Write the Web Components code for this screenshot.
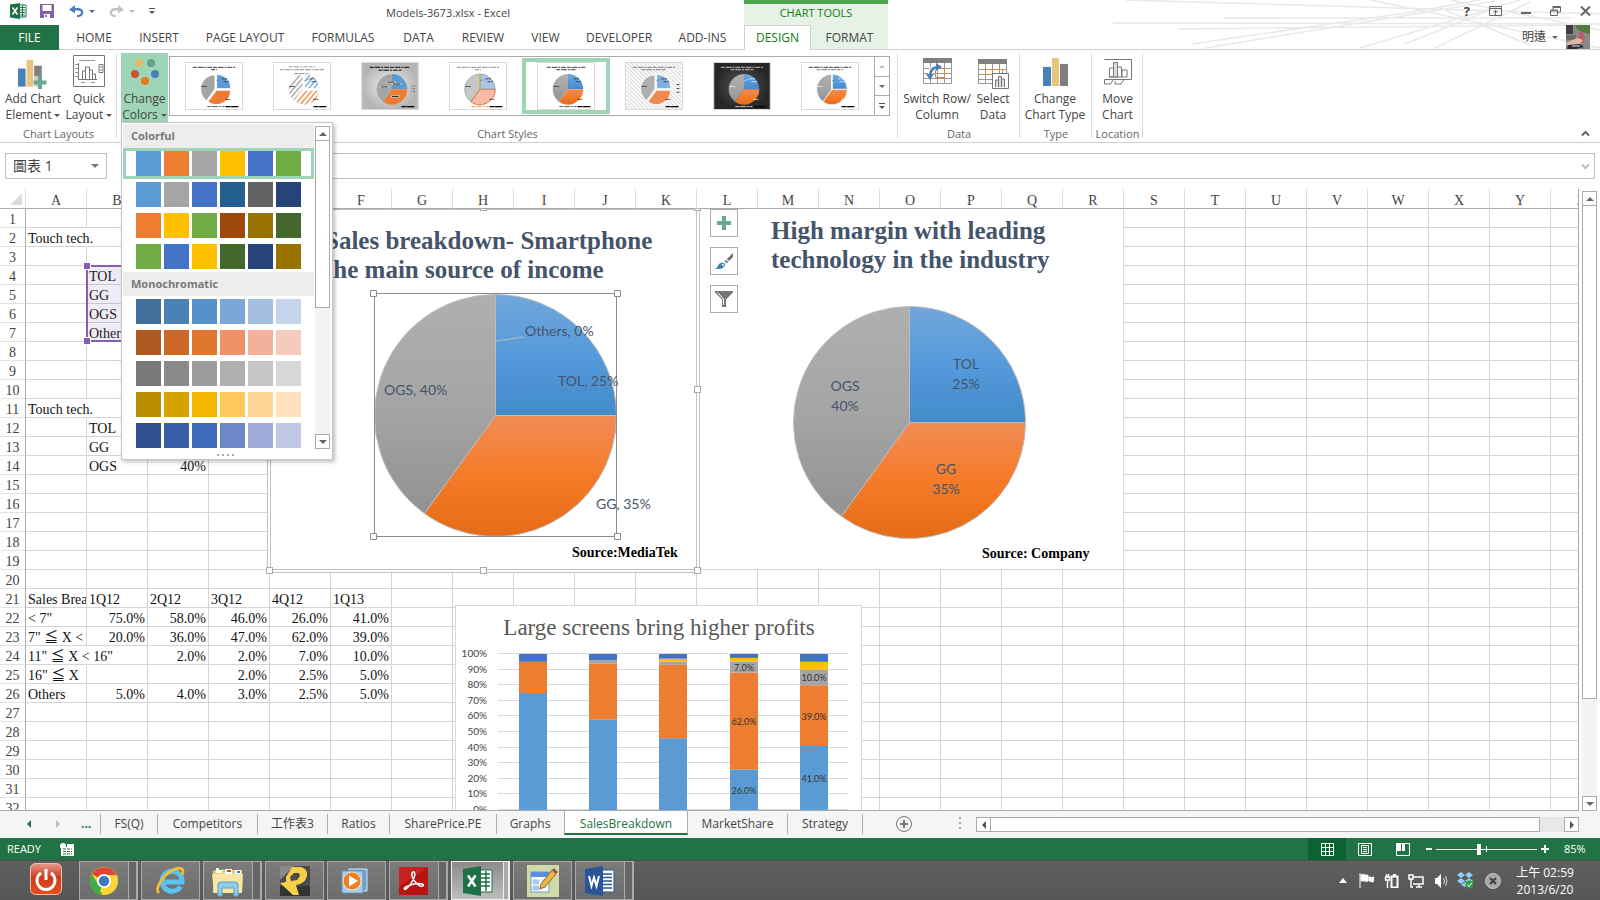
<!DOCTYPE html>
<html lang="en">
<head>
<meta charset="utf-8">
<title>Models-3673.xlsx - Excel</title>
<style>
html,body{margin:0;height:100%}
body{font:12px/16px "Open Sans","Noto Sans","Noto Sans CJK TC",sans-serif;color:#444;background:#fff;overflow:hidden}
</style>
</head>
<body>
<excel-app></excel-app>
<script>
const BASE = `
*{box-sizing:border-box}
:host{display:block;box-sizing:border-box}
button{font:inherit;color:inherit;background:none;border:0;padding:0;margin:0;display:block}
input{font:inherit;color:inherit;margin:0;border:0;padding:0;background:none;outline:0}
a{color:inherit;text-decoration:none}
svg{display:block;flex:none}
`;
function define(name, css, html) {
  customElements.define(name, class extends HTMLElement {
    constructor() {
      super();
      this.attachShadow({mode: 'open'});
    }
    connectedCallback() {
      const t = document.createElement('template');
      t.innerHTML = `<style>${BASE}${css}</style>` + (typeof html === 'function' ? html(this) : html);
      this.shadowRoot.replaceChildren(t.content.cloneNode(true));
    }
  });
}
const tri = (dir = 'd', c = '#666', w = 6) => {
  const p = {d: 'M0 0H6L3 3Z', u: 'M0 3H6L3 0Z', l: 'M3 0V6L0 3Z', r: 'M0 0V6L3 3Z'}[dir];
  const v = dir === 'l' || dir === 'r';
  return `<svg width="${v ? w / 2 : w}" height="${v ? w : w / 2}" viewBox="0 0 ${v ? '3 6' : '6 3'}"><path d="${p}" fill="${c}"/></svg>`;
};

/* ---------- pie geometry ---------- */
const PARTS = [[0, .25], [.25, .6], [.6, 1]];
function slices(cx, cy, r, fills, stroke = '#ccc', gap = 0, sw = 1) {
  return PARTS.map(([a, b], i) => {
    const m = (a + b) * Math.PI, ox = cx + gap * Math.sin(m), oy = cy - gap * Math.cos(m);
    const pt = f => `${(ox + r * Math.sin(f * 2 * Math.PI)).toFixed(2)} ${(oy - r * Math.cos(f * 2 * Math.PI)).toFixed(2)}`;
    return `<path d="M${ox.toFixed(2)} ${oy.toFixed(2)}L${pt(a)}A${r} ${r} 0 0 1 ${pt(b)}Z" fill="${fills[i]}" stroke="${stroke}" stroke-width="${sw}" stroke-linejoin="round"/>`;
  }).join('');
}
const GRADS = `<defs>
<linearGradient id="gb" x2="0" y2="1"><stop stop-color="#71a6db"/><stop offset=".5" stop-color="#559bdb"/><stop offset="1" stop-color="#438ac9"/></linearGradient>
<linearGradient id="go" x2="0" y2="1"><stop stop-color="#f18c55"/><stop offset=".5" stop-color="#f67b28"/><stop offset="1" stop-color="#e56b17"/></linearGradient>
<linearGradient id="gg" x2="0" y2="1"><stop stop-color="#afafaf"/><stop offset=".5" stop-color="#a5a5a5"/><stop offset="1" stop-color="#929292"/></linearGradient>
</defs>`;
const GFILL = ['url(#gb)', 'url(#go)', 'url(#gg)'];

/* ---------- header: title row and ribbon tabs ---------- */
const X_LOGO = `<svg width="17" height="16" viewBox="0 0 17 16"><path d="M9 2h7v12H9z" fill="#fff" stroke="#217346"/><path d="M10 4.500h5M10 7h5M10 9.500h5M10 12h5M12.500 2v12" stroke="#217346"/><path d="M0 1.500L10 0v16L0 14.500z" fill="#1e7145"/><path d="M2.500 4.500l5 7M7.500 4.500l-5 7" stroke="#fff" stroke-width="1.600"/></svg>`;
define('app-header', `
:host{position:relative;background:#fff}
.swoosh{position:absolute;right:0;top:0}
.row{display:flex;height:25px;position:relative}
.left{display:flex;width:744px}
.qat{display:flex;width:152px;height:22px;padding-left:10px;align-items:center}
.qat button{height:22px;display:flex;align-items:center}
.name{flex:1;text-align:center;font-size:11px;line-height:25px}
.ctx{width:144px;background:#e6f2e6;border-top:4px solid #4ca64c;color:#107c10;font-size:11px;line-height:18px;text-align:center}
.right{flex:1;display:flex;height:22px;justify-content:flex-end;align-items:center;padding-right:9px}
.right button{margin-left:19px}
nav{display:flex;flex:1}
nav a{height:25px;line-height:25px;text-align:center;border-bottom:1px solid #d0d0d0;flex:none}
nav .file{width:59px;margin-right:0;background:#217346;color:#fff;border-color:#217346}
nav i{width:3px;border-bottom:1px solid #d0d0d0}
nav .on{width:67px;color:#107c10;background:#fff;border:1px solid #d0d0d0;border-bottom:0;line-height:24px}
nav .fmt{width:77px;background:#e6f2e6}
.user{flex:1;display:flex;justify-content:flex-end;align-items:center;gap:8px;padding-right:10px;border-bottom:1px solid #d0d0d0}
.user button{display:flex;align-items:center;gap:6px;height:24px}
`, () => `
<svg class="swoosh" width="560" height="50" viewBox="0 0 560 50" fill="none" stroke="#e9e9e9" stroke-width="1.500"><path d="M85 0L560 14M73 23L560 24M184 18H530M138 29L540 25M152 44L372 12L440 0M165 48L455 1M320 48L480 0M365 44L450 10M395 48L490 2M330 0L560 48M410 0L560 30M400 8L490 45"/></svg>
<div class="row">
 <div class="left">
  <div class="qat">
   ${X_LOGO}
   <button aria-label="Save" style="margin-left:13px"><svg width="14" height="14" viewBox="0 0 14 14"><path d="M0 0h14v14H0z" fill="#8660a6"/><path d="M2.500 1h9v6h-9zM4 10h6v4H4z" fill="#fff"/><path d="M5 11h2v2H5z" fill="#8660a6"/></svg></button>
   <button aria-label="Undo" style="margin-left:15px"><svg width="15" height="13" viewBox="0 0 15 13"><path d="M6 0v3h3c7 0 7 9 0 9H8v-2h1c4 0 4-4.500 0-4.500H6v3L0 4.500z" fill="#4a80bd"/></svg></button>
   <button aria-label="Undo list" style="margin-left:5px">${tri()}</button>
   <button aria-label="Redo" style="margin-left:14px"><svg width="15" height="13" viewBox="0 0 15 13"><path d="M9 0v3H6c-7 0-7 9 0 9h1v-2H6c-4 0-4-4.500 0-4.500h3v3l6-4z" fill="#c3c3c3"/></svg></button>
   <button aria-label="Redo list" style="margin-left:5px">${tri('d', '#bbb')}</button>
   <button aria-label="Customize" style="margin-left:14px"><svg width="6" height="6"><path d="M0 0h6v1H0zM0 3h6L3 6z" fill="#555"/></svg></button>
  </div>
  <div class="name">Models-3673.xlsx - Excel</div>
 </div>
 <div class="ctx">CHART TOOLS</div>
 <div class="right">
  <button aria-label="Help" style="font:bold 13px/20px 'Open Sans'">?</button>
  <button aria-label="Ribbon options"><svg width="13" height="10" fill="none" stroke="#666"><path d="M.5.5h12v9H.5zM.5 2.500h12M6.500 9V4.500M4.500 6.500l2-2 2 2"/></svg></button>
  <button aria-label="Minimize"><svg width="10" height="10"><path d="M0 6h10v2H0z" fill="#666"/></svg></button>
  <button aria-label="Restore"><svg width="11" height="10" fill="none" stroke="#666"><path d="M.5 4h7v5.500h-7zM.5 5h7M3 4V.5h7.500V6H8M3 1.500h7"/></svg></button>
  <button aria-label="Close"><svg width="11" height="10" fill="none" stroke="#666" stroke-width="2"><path d="M1 .5l9 9M10 .5l-9 9"/></svg></button>
 </div>
</div>
<div class="row">
 <nav>
  <a href="#" class="file">FILE</a><i></i>
  ${[['HOME', 64], ['INSERT', 66], ['PAGE LAYOUT', 106], ['FORMULAS', 90], ['DATA', 61], ['REVIEW', 68], ['VIEW', 57], ['DEVELOPER', 90], ['ADD-INS', 77]].map(([t, w]) => `<a href="#" style="width:${w}px">${t}</a>`).join('')}<i></i>
  <a href="#" class="on">DESIGN</a><a href="#" class="fmt">FORMAT</a>
  <div class="user"><button>明遠 ${tri()}</button>
   <svg width="24" height="24" viewBox="0 0 24 24"><path d="M0 0h24v24H0z" fill="#8a8a84"/><path d="M0 0h7v9H0z" fill="#3b3f44"/><path d="M9 0h15v9l-8-2-5-3z" fill="#4e7c3c"/><path d="M0 10h10v5H0z" fill="#6d6a66"/><path d="M13 8l3-2 3 7-2 5-4-2z" fill="#c9546e"/><path d="M0 18l11-5 6 2-3 4-12 3z" fill="#ddb9a4"/><path d="M2 20l12-1 4 3-8 2H1z" fill="#2a2d33"/><path d="M6 21h8" stroke="#dfe6ea"/></svg></div>
 </nav>
</div>`);

/* ---------- ribbon ---------- */
define('ribbon-group', `
:host{display:flex;flex-direction:column;flex:none;height:92px;position:relative}
:host::after{content:"";position:absolute;right:0;top:3px;bottom:4px;width:1px;background:#dcdcdc}
.c{display:flex;padding-top:3px;height:76px}
.l{text-align:center;font-size:11px;line-height:16px;color:#666;white-space:nowrap}
`, h => `<div class="c"><slot></slot></div><div class="l">${h.getAttribute('label')}</div>`);
define('ribbon-button', `
:host{flex:none}
button{width:100%;height:69px;padding-top:2px;text-align:center;white-space:nowrap}
.i{height:34px;margin-bottom:2px;display:flex;justify-content:center;align-items:flex-start}
.s{display:flex;align-items:center;justify-content:center;gap:3px}
:host([on]) button{background:#9fd5b7}
`, h => `<button><div class="i"><slot></slot></div><div class="s">${h.getAttribute('top')}</div><div class="s">${h.getAttribute('bottom')}${h.hasAttribute('menu') ? tri('d', '#555', 6) : ''}</div></button>`);

const words = (y, w, c = '#333', x = 29) => `<path d="M${x - w / 2} ${y}h${w}" stroke="${c}" stroke-width="1" stroke-dasharray="4 1 6 1 2 1 5 1"/>`;
const FLAT = ['#5b9bd5', '#ed7d31', '#a5a5a5'];
const thumbs = [
  () => `${words(4.500, 44)}${words(7, 6)}${slices(31, 27.500, 15, FLAT, '#fff', 1, 1)}${words(45.500, 18, '#555', 31)}`,
  () => `<defs>${[['hb', '#5b9bd5'], ['ho', '#ed7d31'], ['hg', '#999']].map(([i, c]) => `<pattern id="${i}" width="4" height="4" patternUnits="userSpaceOnUse" patternTransform="rotate(40)"><path d="M0 0h1.300v4H0z" fill="${c}"/></pattern>`).join('')}</defs>${words(4, 28, '#999')}${words(7, 46, '#888')}${words(11, 16, '#888')}${slices(31, 27.500, 15.500, ['url(#hb)', 'url(#ho)', 'url(#hg)'], '#fff', 1, 1)}`,
  () => `<defs><radialGradient id="rg"><stop stop-color="#f4f4f4"/><stop offset="1" stop-color="#b5b5b5"/></radialGradient></defs><path d="M0 0h58v48H0z" fill="url(#rg)"/>${words(4.500, 42, '#000')}${words(7.500, 24, '#000')}${slices(31, 27.500, 16, FLAT, 'none')}<path d="M25 20h10M31 22h10M18 25h10M30 35h9" stroke="#ddd" stroke-width="2"/><path d="M26 20h8M32 22h8M19 25h8M31 35h7" stroke="#222"/><path d="M51 24h4M51 27h4M51 30h4" stroke="#666" stroke-dasharray="1 1 2"/>`,
  () => `${words(4.500, 44, '#888')}${words(7, 6, '#888')}${slices(31, 27.500, 16, ['#a9c7ee', '#f9b9a2', '#c6c6c6'], '#888', 0, .6)}<path d="M31 27.500H47A16 16 0 0 1 21.600 40.440Z" fill="none" stroke="#ee7a4a" stroke-width=".8"/><path d="M31 11v16" stroke="#d0b23a" stroke-width="1.500"/>${words(45.500, 18, '#ed9d31', 31)}`,
  () => `${words(4.500, 40)}${words(7, 20)}${slices(31, 27.500, 16, GFILL, 'none')}${words(45.500, 18, '#555', 31)}`,
  () => `<defs><pattern id="bg" width="3" height="3" patternUnits="userSpaceOnUse" patternTransform="rotate(-45)"><path d="M0 0h1.200v3H0z" fill="#d8d8d8"/></pattern></defs><path d="M0 0h58v48H0z" fill="url(#bg)"/>${words(4.500, 44, '#777')}${words(7, 26, '#777')}${slices(31, 27.500, 15, ['#7db0e4', '#f08a50', '#b0b0b0'], '#fff', 1, 1)}<path d="M54 22v12" stroke="#444" stroke-width="3" stroke-dasharray="1 3"/>`,
  () => `<defs><radialGradient id="dk"><stop stop-color="#5a5a5a"/><stop offset="1" stop-color="#262626"/></radialGradient></defs><path d="M0 0h58v48H0z" fill="url(#dk)"/>${words(4.500, 44, '#ccc')}${words(7, 24, '#ccc')}${slices(31, 27.500, 16, GFILL, 'none')}${words(45.500, 18, '#ccc', 31)}`,
  () => `${words(4.500, 44)}${words(7, 28, '#777')}${slices(31, 27.500, 16, GFILL, '#fff', 0, .8)}<path d="M31 27.500V11" stroke="#fff" stroke-width="1.500"/>`
];
const labelTicks = i => {
  const c = i === 6 || i === 7 ? '#eee' : '#333';
  return (i === 2 ? '' : `<path d="M31 18.500l6-1.500" stroke="${i === 6 ? '#ccc' : '#789'}" stroke-width=".7"/><path d="M37 16.500h8M39 19.500h6M16 24.500h6M41 38h5" stroke="${c}" stroke-width=".9" stroke-dasharray="3 .5 2"/>`) + `<path d="M41 45.500h15" stroke="#000" stroke-width="1.200" stroke-dasharray="5 .5 8"/>`;
};
define('style-gallery', `
:host{display:flex;flex:none;height:60px;width:721px;margin:3px 0 0 1px;border:1px solid #ababab;background:#fff}
.t{width:88px;height:58px;display:flex;align-items:center;justify-content:center}
.t.on{border:4px solid #9fd5b7;height:56px;margin-top:1px}
.t svg{border:1px solid #d9d9d9}
.s{width:15px;border-left:1px solid #ababab;display:flex;flex-direction:column}
.s button{flex:1;display:flex;align-items:center;justify-content:center;width:100%}
.s button+button{border-top:1px solid #ababab}
`, () => thumbs.map((f, i) => `<button class="t${i === 4 ? ' on' : ''}" aria-label="Style ${i + 1}"><svg width="58" height="48" viewBox="0 0 58 48">${i === 4 || i > 5 ? GRADS : ''}${f()}${labelTicks(i)}</svg></button>`).join('') +
 `<div class="s"><button aria-label="Scroll up">${tri('u', '#bbb')}</button><button aria-label="Scroll down">${tri()}</button><button aria-label="More styles"><svg width="6" height="6"><path d="M0 0h6v1H0zM0 3h6L3 6z" fill="#555"/></svg></button></div>`);

const COLORFUL = ['5b9bd5 ed7d31 a5a5a5 ffc000 4472c4 70ad47', '5b9bd5 a5a5a5 4472c4 255e91 636363 264478', 'ed7d31 ffc000 70ad47 9e480e 997300 43682b', '70ad47 4472c4 ffc000 43682b 264478 997300'];
const MONO = ['416f9c 4a82b5 5592cb 7ba7d8 a2bee1 c4d4eb', 'ae5a21 c96827 e0762d f09067 f3b19b f5cbbe', '787878 8a8a8a 9c9c9c afafaf c5c5c5 d8d8d8', 'ba8c00 d7a200 f2b800 ffc95b ffd593 ffe1bb', '2f528f 375fa6 3f6bba 6c87ca 9eabd8 bfc8e4'];
define('color-picker', `
:host{position:absolute;z-index:10;display:flex;width:212px;height:338px;background:#fff;border:1px solid #c6c6c6;box-shadow:2px 2px 4px rgba(0,0,0,.25);padding:1px 1px 0}
.m{width:191px;flex:none}
h3{margin:0;height:24px;background:#ededed;color:#777;font:bold 11px/24px "Open Sans",sans-serif;padding-left:8px}
.r{display:flex;gap:3px;height:31px;width:191px;padding:3px 0 0 13px}
.r.on{border:3px solid #9fd5b7;padding:0 0 0 10px}
.r i{width:25px;height:25px}
.grip{height:8px;display:flex;justify-content:center;align-items:center;gap:3px;padding-left:14px}
.grip b{width:2px;height:2px;background:#aaa}
.s{width:15px;height:323px;margin:2px 0 0 1px;background:#f3f3f3;display:flex;flex-direction:column}
.s button,.s div{background:#fff;border:1px solid #ababab;width:15px;height:15px;display:flex;align-items:center;justify-content:center}
.s .th{height:168px;margin-top:-1px}
.s .sp{flex:1;border:0;background:none}
`, () => {
  const row = (s, on) => `<button class="r${on ? ' on' : ''}" aria-label="Colour set">${s.split(' ').map(c => `<i style="background:#${c}"></i>`).join('')}</button>`;
  return `<div class="m"><h3>Colorful</h3>${COLORFUL.map((s, i) => row(s, !i)).join('')}<h3>Monochromatic</h3>${MONO.map(s => row(s)).join('')}<div class="grip"><b></b><b></b><b></b><b></b></div></div>
  <div class="s"><button aria-label="Up">${tri('u', '#666', 8)}</button><div class="th"></div><div class="sp"></div><button aria-label="Down">${tri('d', '#666', 8)}</button></div>`;
});

const BARS = `<path d="M0 9h8v19H0z" fill="#4a80b8"/><path d="M9 0h7v28H9z" fill="#e8c57e"/><path d="M17 6h8v22h-8z" fill="#808080"/>`;
const MINI = `fill="none" stroke="#777"`;
define('ribbon-bar', `
:host{display:flex;position:relative;height:93px;border-bottom:1px solid #d0d0d0;background:#fff;z-index:5}
.drop{position:relative;flex:none;width:47px}
color-picker{left:0;top:69px}
.collapse{position:absolute;right:10px;bottom:5px}
`, `
<ribbon-group label="Chart Layouts" style="width:117px">
 <ribbon-button style="width:64px;margin-left:1px" top="Add Chart" bottom="Element" menu><svg width="30" height="32" viewBox="0 -3 30 32" style="margin-top:2px"><g transform="scale(.95)">${BARS}</g><path d="M15 16h13v13H15z" fill="#fff" opacity=".6"/><path d="M20 16h4v4.500h4.500v4H24V29h-4v-4.500h-4.500v-4H20z" fill="#6aa694"/></svg></ribbon-button>
 <ribbon-button style="width:48px" top="Quick" bottom="Layout" menu><svg width="32" height="32" ${MINI}><path d="M.5.5h31v31H.5z"/><path d="M6 5.500h16M2 9.500h3M2 13.500h3M2 17.500h3M2 21.500h3M8 27.500h4M18 27.500h4" stroke="#999"/><path d="M5.500 8v16.500H24M9.500 24V16h3v8M12.500 24V12h4v12M16.500 24v-9h3v9M19.500 24v-5h3v5M26 9.500h4v8h-4zM27 12h2M27 15h2"/></svg></ribbon-button>
</ribbon-group>
<ribbon-group label="Chart Styles" style="width:781px">
 <div class="drop" style="margin-left:4px"><ribbon-button on top="Change" bottom="Colors" menu><svg width="28" height="28" viewBox="0 0 28 28" style="margin-top:3px"><circle cx="8" cy="5" r="4" fill="#e8b566"/><circle cx="20" cy="5" r="4" fill="#5fa58a"/><circle cx="4" cy="16" r="4" fill="#cf5333"/><circle cx="24" cy="16" r="4" fill="#4a80b8"/><circle cx="14" cy="23" r="4" fill="#e57a1f"/></svg></ribbon-button>
 <color-picker></color-picker></div>
 <style-gallery></style-gallery>
</ribbon-group>
<ribbon-group label="Data" style="width:122px">
 <ribbon-button style="width:68px;margin-left:5px" top="Switch Row/" bottom="Column"><svg width="29" height="27" viewBox="0 0 29 27" style="margin-top:3px"><path d="M.5 5v20.500h28V5M.5 10.500h28M.5 15.500h28M.5 20.500h28M7.500 5v20M14.500 5v20M21.500 5v20" fill="none" stroke="#999"/><path d="M0 0h29v5H0z" fill="#808080"/><path d="M12.500 10.500h9v9h-9z" fill="none" stroke="#e0872f"/><path d="M7 20c0-7 3-12 9-12" fill="none" stroke="#fff" stroke-width="5"/><path d="M7 19c0-6 3-10 9-10" fill="none" stroke="#4a80b8" stroke-width="2.500"/><path d="M13 5l6 4-6 4zM3 16h8l-4 6z" fill="#4a80b8"/></svg></ribbon-button>
 <ribbon-button style="width:42px;margin-left:1px" top="Select" bottom="Data"><svg width="31" height="30" viewBox="0 0 31 30" style="margin-top:4px"><path d="M.5 5v19.500h28V5M.5 10.500h28M.5 15.500h28M.5 20.500h28M7.500 5v20M14.500 5v20M21.500 5v20" fill="none" stroke="#999"/><path d="M0 0h29v5H0z" fill="#808080"/><path d="M7.500 10.500h17v5h-17z" fill="none" stroke="#e0872f"/><path d="M14.500 14.500h16v15h-16z" fill="#fff" stroke="#777"/><path d="M17.500 28v-7h3v7M20.500 28V17.500h3V28M23.500 28v-8h3v8" fill="#ddd" stroke="#777"/></svg></ribbon-button>
</ribbon-group>
<ribbon-group label="Type" style="width:72px"><ribbon-button style="width:68px;margin-left:1px" top="Change" bottom="Chart Type"><svg width="25" height="28" style="margin-top:3px">${BARS}</svg></ribbon-button></ribbon-group>
<ribbon-group label="Location" style="width:51px"><ribbon-button style="width:47px;margin-left:2px" top="Move" bottom="Chart"><svg width="28" height="27" style="margin-top:4px" ${MINI}><path d="M.5.500h27v20H.5v4.500h6l3-4.500M11 25h6l3-4.500M11 25v-3"/><path d="M5.500 18V9h4v9zM13.500 18V8h4v10M18 18v-7h5v7M5 18h18"/><path d="M9.500 3.500h4V18h-4z" fill="#ddd"/></svg></ribbon-button></ribbon-group>
<button class="collapse" aria-label="Collapse ribbon"><svg width="9" height="7" fill="none" stroke="#666" stroke-width="2"><path d="M1 5.500l3.500-3.500L8 5.500"/></svg></button>`);

/* ---------- formula bar ---------- */
define('formula-bar', `
:host{display:flex;height:46px;padding:10px 5px;background:#fff}
div{display:flex;align-items:center;height:26px;border:1px solid #c0c0c0}
.n{width:102px;margin-right:93px;padding:0 7px}
.n input{width:78px;font-size:14px}
.f{flex:1;padding:0 4px}
.f input{flex:1}
`, `<div class="n"><input aria-label="Name box" value="圖表 1"><button aria-label="Names">${tri('d', '#777', 8)}</button></div>
<div class="f"><input aria-label="Formula"><button aria-label="Expand"><svg width="9" height="7" fill="none" stroke="#bbb" stroke-width="2"><path d="M1 1.500l3.500 3.500L8 1.500"/></svg></button></div>`);

/* ---------- charts ---------- */
const CHART_TEXT = `
text{font-family:Lato,sans-serif;font-size:14px;fill:#44546a}
.t{font:bold 25px "Liberation Serif",serif}
.src{font:bold 14px "Liberation Serif",serif;fill:#000}`;
define('sales-pie', `
:host{position:absolute;background:#fff;border:4px double #c0c0c0}
${CHART_TEXT}
.h{position:absolute;width:7px;height:7px;border:1px solid #aaa;background:#fff}
`, `<svg width="425" height="359">${GRADS}
<text class="t" x="54" y="39">Sales breakdown- Smartphone</text><text class="t" x="54" y="68">the main source of income</text>
${slices(224.5, 205.5, 121, GFILL, '#bcbcbc', 0, 1)}
<path d="M225 131l28-4" stroke="#bcbcbc"/><path d="M103.500 83.500h242v243h-242z" fill="none" stroke="#8c8c8c"/>
<path d="M99.500 80.500h6v6h-6zM343.500 80.500h6v6h-6zM99.500 323.500h6v6h-6zM343.500 323.500h6v6h-6z" fill="#fff" stroke="#8c8c8c"/>
<text x="254" y="126">Others, 0%</text><text x="287" y="176">TOL, 25%</text><text x="113" y="185">OGS, 40%</text><text x="325" y="299">GG, 35%</text>
<text class="src" x="301" y="347">Source:MediaTek</text></svg>
<i class="h" style="left:-5px;bottom:-5px"></i><i class="h" style="left:209px;bottom:-5px"></i><i class="h" style="right:-5px;bottom:-5px"></i><i class="h" style="right:-5px;top:176px"></i><i class="h" style="left:209px;top:-6px"></i><i class="h" style="right:-5px;top:-6px"></i>`);
define('margin-pie', `
:host{position:absolute;background:#fff;border:1px solid #d9d9d9;border-width:0 1px 1px 0}
${CHART_TEXT}
g{text-anchor:middle}`, `<svg width="423" height="360">${GRADS}
<text class="t" x="71" y="30">High margin with leading</text><text class="t" x="71" y="59">technology in the industry</text>
${slices(209.5, 213.5, 116, GFILL, '#bcbcbc', 0, 1)}
<g><text x="266" y="160">TOL</text><text x="266" y="180">25%</text><text x="145" y="182">OGS</text><text x="145" y="202">40%</text><text x="246" y="265">GG</text><text x="246" y="285">35%</text></g>
<text class="src" x="282" y="349">Source: Company</text></svg>`);
define('profit-bars', `
:host{position:absolute;background:#fff;border:1px solid #d9d9d9}
text{font-family:Lato,sans-serif;fill:#333}
.t{font:23px "Liberation Serif",serif;fill:#595959;text-anchor:middle}
.a{font-size:10px;text-anchor:end;fill:#444}
.d{font-size:9px;text-anchor:middle}`, () => {
  const data = [[75, 20, 0, 0, 5], [58, 36, 2, 0, 4], [46, 47, 2, 2, 3], [26, 62, 7, 2.5, 2.5], [41, 39, 10, 5, 5]];
  const cols = ['#5b9bd5', '#ed7d31', '#a5a5a5', '#ffc000', '#4472c4'];
  const y = p => 48 + (100 - p) * 1.56;
  let s = '<svg width="405" height="250"><text class="t" x="203" y="29">Large screens bring higher profits</text>';
  for (let p = 100; p >= 0; p -= 10) s += `<path d="M42 ${Math.round(y(p)) - .5}h350" stroke="#d9d9d9"/><text class="a" x="31" y="${Math.round(y(p)) + 3}">${p}%</text>`;
  data.forEach((d, i) => {
    let a = 0;
    const x = 63 + Math.round(i * 70.2);
    d.forEach((v, k) => {
      s += `<rect x="${x}" y="${y(a + v).toFixed(1)}" width="28" height="${(v * 1.56).toFixed(1)}" fill="${cols[k]}"/>`;
      if (i > 2 && v > 6) s += `<text class="d" x="${x + 14}" y="${Math.round(y(a + v / 2)) + 4}">${v.toFixed(1)}%</text>`;
      a += v;
    });
  });
  return s + '</svg>';
});
define('chart-tools', `
:host{position:absolute;display:flex;flex-direction:column;gap:10px}
button{width:28px;height:28px;border:1px solid #ababab;background:#fff;display:flex;align-items:center;justify-content:center}
`, `<button aria-label="Chart elements"><svg width="14" height="14"><path d="M5 0h4v5h5v4H9v5H5V9H0V5h5z" fill="#6aa694"/></svg></button>
<button aria-label="Chart styles"><svg width="18" height="17" viewBox="0 0 18 17"><path d="M18 0v4l-4 4-2-2z" fill="#6e6e6e"/><path d="M11 6.500l2.500 2.500-2 1.500L9.500 8.500z" fill="#888"/><path d="M0 16c3-1 3-6 7-6.500 3 0 4 3 2 4.500-2 2-5 2-9 2z" fill="#3f7ab0"/><path d="M7 11l2 2" stroke="#fff" stroke-width="1.500"/></svg></button>
<button aria-label="Chart filters"><svg width="18" height="16" viewBox="0 0 18 16"><path d="M0 0h18v1.500l-7 7V16H7V8.500l-7-7z" fill="#777"/><path d="M2.500 1.500L8.500 8v6" fill="none" stroke="#fff"/></svg></button>`);

/* ---------- worksheet ---------- */
const CELLS = {
  2: {A: 'Touch tech.'}, 4: {B: 'TOL'}, 5: {B: 'GG'}, 6: {B: 'OGS'}, 7: {B: 'Others'}, 11: {A: 'Touch tech.'},
  12: {B: 'TOL'}, 13: {B: 'GG'}, 14: {B: 'OGS', C: '40%'},
  21: {A: 'Sales Break', B: '1Q12', C: '2Q12', D: '3Q12', E: '4Q12', F: '1Q13'},
  22: {A: '&lt; 7"', B: '75.0%', C: '58.0%', D: '46.0%', E: '26.0%', F: '41.0%'},
  23: {A: '7" ≦ X &lt;', B: '20.0%', C: '36.0%', D: '47.0%', E: '62.0%', F: '39.0%'},
  24: {A: '11" ≦ X &lt; 16"', C: '2.0%', D: '2.0%', E: '7.0%', F: '10.0%'},
  25: {A: '16" ≦ X', D: '2.0%', E: '2.5%', F: '5.0%'},
  26: {A: 'Others', B: '5.0%', C: '4.0%', D: '3.0%', E: '2.5%', F: '5.0%'}
};
const SPILL = ['2A', '11A', '24A'];
define('sheet-grid', `
:host{display:flex;flex:1;min-height:0;background:#fff}
.g{flex:1;min-width:0;position:relative;overflow:hidden;border-right:1px solid #ababab;border-bottom:1px solid #ababab}
table{table-layout:fixed;width:0;border-spacing:0;font:14px/14px "Liberation Serif","Noto Sans CJK TC",serif;color:#111}
th,td{height:19px;padding:0 2px;border-right:1px solid #d4d4d4;border-bottom:1px solid #d4d4d4;vertical-align:bottom;white-space:nowrap;overflow:hidden;text-align:left}
th{font-weight:400;text-align:center;color:#444;padding:0}
thead th{height:20px;border-right-color:#dcdcdc;border-bottom-color:#ababab}
tbody th{border-right-color:#ababab;border-bottom-color:#e2e2e2}
thead th:first-child{border-right-color:#dcdcdc}
thead svg{margin:0 0 3px 10px}
.n{text-align:right}
.spill{overflow:visible;border-right-color:transparent}
.ov{position:absolute;left:26px;top:20px;right:0;bottom:0;overflow:hidden;pointer-events:none}
.sel{position:absolute;left:60px;top:56px;width:122px;height:77px;border:2px solid #8560ae;background:rgba(133,96,174,.12)}
.sel i{position:absolute;width:6px;height:6px;left:-4px;background:#8560ae;outline:1px solid #fff}
.sb{width:21px;padding:2px 3px 0;display:flex;flex-direction:column}
.sb button,.sb div{flex:none;width:15px;height:15px;border:1px solid #ababab;display:flex;align-items:center;justify-content:center}
.sb .th{flex:494;margin-top:-1px}
.sb .sp{flex:97;border:0;background:#f3f3f3}
sales-pie{left:241px;top:-3px;width:433px;height:367px}
margin-pie{left:674px;top:0;width:424px;height:361px}
profit-bars{left:429px;top:396px;width:407px;height:252px}
chart-tools{left:684px;top:0}
`, () => {
  const nc = Math.ceil((innerWidth - 48) / 61), nr = Math.ceil((innerHeight - 298) / 19);
  const name = i => (i > 25 ? String.fromCharCode(64 + Math.floor(i / 26)) : '') + String.fromCharCode(65 + i % 26);
  const cols = Array.from({length: nc}, (_, i) => name(i));
  let h = `<div class="g"><table><colgroup><col style="width:26px">${'<col style="width:61px">'.repeat(nc)}</colgroup><thead><tr><th><svg width="12" height="12"><path d="M12 0v12H0z" fill="#dcdcdc"/></svg></th>${cols.map(c => `<th>${c}</th>`).join('')}</tr></thead><tbody>`;
  for (let r = 1; r <= nr; r++) h += `<tr><th>${r}</th>${cols.map(c => {
    const v = (CELLS[r] || {})[c] || '';
    const k = v.endsWith('%') ? 'n' : SPILL.includes(r + c) ? 'spill' : '';
    return `<td${k ? ` class="${k}"` : ''}>${v}</td>`;
  }).join('')}</tr>`;
  return h + `</tbody></table><div class="ov"><div class="sel"><i style="top:-4px"></i><i style="bottom:-4px"></i></div><margin-pie></margin-pie><sales-pie></sales-pie><profit-bars></profit-bars><chart-tools></chart-tools></div></div>
  <div class="sb"><button aria-label="Scroll up">${tri('u', '#666', 8)}</button><div class="th"></div><div class="sp"></div><button aria-label="Scroll down">${tri('d', '#666', 8)}</button></div>`;
});

/* ---------- sheet tabs ---------- */
define('sheet-tabs', `
:host{display:flex;height:27px;background:#f5f5f5;color:#444}
.nav{width:100px;display:flex;align-items:center;height:26px;padding-left:27px;flex:none}
nav{display:flex;flex:none}
nav a{height:20px;margin-top:3px;line-height:20px;text-align:center;border-right:1px solid #ababab;white-space:nowrap}
nav a:first-child{border-left:1px solid #ababab}
nav .pre{border-right-color:transparent}
nav .on{background:#fff;color:#217346;height:25px;margin-top:-1px;line-height:28px;border:1px solid #ababab;border-top:0;border-bottom:2px solid #217346}
.add{margin:5px 0 0 33px;height:16px}
.end{margin-left:auto;display:flex;padding:6px 21px 0 0}
.end b{width:2px;height:14px;margin-right:15px;background:repeating-linear-gradient(#aaa 0 2px,transparent 2px 5px)}
.end button,.end div{height:15px;width:15px;background:#fff;border:1px solid #ababab;display:flex;align-items:center;justify-content:center}
.end .th{width:550px;margin-left:-1px}
.end .sp{width:24px;border:0;background:#e8e8e8}
`, `<div class="nav"><button aria-label="Previous sheets">${tri('l', '#217346', 8)}</button><button aria-label="Next sheets" style="margin-left:25px">${tri('r', '#bbb', 8)}</button><button style="margin-left:21px;color:#217346;font-weight:bold">...</button></div>
<nav>${[['FS(Q)', 58], ['Competitors', 100], ['工作表3', 70], ['Ratios', 62], ['SharePrice.PE', 107], ['Graphs', 67, 'pre'], ['SalesBreakdown', 124, 'on'], ['MarketShare', 100], ['Strategy', 75]].map(([t, w, c]) => `<a href="#" class="${c || ''}" style="width:${w}px">${t}</a>`).join('')}</nav>
<button class="add" aria-label="New sheet"><svg width="16" height="16" fill="none" stroke="#777"><circle cx="8" cy="8" r="7.500"/><path d="M8 4v8M4 8h8" stroke-width="2"/></svg></button>
<div class="end"><b></b><button aria-label="Scroll left">${tri('l', '#555', 8)}</button><div class="th"></div><div class="sp"></div><button aria-label="Scroll right">${tri('r', '#555', 8)}</button></div>`);

/* ---------- status bar ---------- */
define('status-bar', `
:host{display:flex;align-items:center;height:22px;background:#217346;color:#fff;font-size:11px;padding:0 14px 0 7px}
.m{margin-left:19px}
.v{margin-left:auto;display:flex;height:22px}
.v button{width:38px;height:22px;display:flex;align-items:center;justify-content:center}
.v .on{background:#0a6332}
.z{display:flex;align-items:center}
label{position:relative;margin:0 4px;display:block;height:12px;width:101px}
label::before{content:"";position:absolute;left:50px;top:3px;width:1px;height:6px;background:#fff}
input{-webkit-appearance:none;appearance:none;width:101px;height:12px;display:block;background:linear-gradient(#fff,#fff) 0 50%/100% 1px no-repeat}
input::-webkit-slider-thumb{-webkit-appearance:none;width:4px;height:11px;background:#fff}
.p{margin-left:15px;width:22px}
`, `<span>READY</span><svg class="m" width="14" height="13" viewBox="0 0 14 13"><path d="M3 4h11v9H1V6z" fill="#fff"/><circle cx="3" cy="3" r="3" fill="#fff"/><path d="M7 1h7v3H7z" fill="#fff"/><path d="M3 6h9M3 8.500h9M3 11h9" stroke="#217346" stroke-dasharray="3 1"/></svg>
<div class="v"><button class="on" aria-label="Normal"><svg width="13" height="13" fill="none" stroke="#fff"><path d="M.5.5h12v12H.5zM.5 4.500h12M.5 8.500h12M4.500.5v12M8.500.5v12"/></svg></button>
<button aria-label="Page layout"><svg width="14" height="13" fill="none" stroke="#fff"><path d="M.5.5h13v12H.5zM3.500 2.500h7v8h-7zM5 4.500h4M5 6.500h4M5 8.500h4"/></svg></button>
<button aria-label="Page break"><svg width="14" height="13" fill="none" stroke="#fff"><path d="M.5.5h13v12H.5z"/><path d="M1 1h4v7H1zM6 1h3v7H6z" fill="#fff" stroke="none"/></svg></button></div>
<div class="z" style="margin-left:4px"><button aria-label="Zoom out"><svg width="6" height="12"><path d="M0 5h6v2H0z" fill="#fff"/></svg></button><label><input type="range" aria-label="Zoom" min="0" max="100" value="42"></label><button aria-label="Zoom in"><svg width="8" height="12"><path d="M0 5h8v2H0zM3 2h2v8H3z" fill="#fff"/></svg></button></div>
<span class="p">85%</span>`);

/* ---------- taskbar ---------- */
const officeIcon = (c, d, mark) => `<svg width="30" height="30" viewBox="0 0 30 30"><path d="M15 4h14v22H15z" fill="#fff" stroke="${c}"/>${d}<path d="M0 3l18-3v30L0 27z" fill="${c}"/>${mark}</svg>`;
define('task-bar', `
:host{display:flex;height:40px;background:linear-gradient(#5f5f5f,#565656);border-top:1px solid #4d4d4d;color:#fff;padding-left:30px}
.pw{width:49px;height:39px;padding-bottom:3px;flex:none}
.apps{display:flex;gap:3px;flex:none}
.b{width:59px;height:39px;border:1px solid #aaa;background:linear-gradient(#7c7c7c,#6c6c6c);display:flex;align-items:center;justify-content:center;position:relative}
.multi{padding-right:10px}
.multi::after{content:"";position:absolute;right:0;top:0;width:7px;height:37px;border:solid #aaa;border-width:0 1px;background:#666}
.on{background:linear-gradient(#8b8b8b,#bdbdbd);border-color:#f0f0f0;padding-right:6px}
.on::after{width:4px;border-color:#eee;background:#aaa}
.tray{margin-left:auto;display:flex;align-items:center;gap:9px}
.clock{width:64px;text-align:center;font-size:12px;line-height:17px;margin:0 23px 0 3px;white-space:nowrap}
`, `<button class="pw" aria-label="Power"><svg width="32" height="32" viewBox="0 0 32 32"><defs><linearGradient id="p" x2="0" y2="1"><stop stop-color="#e59a8a"/><stop offset=".45" stop-color="#cc3a1c"/><stop offset="1" stop-color="#e8501c"/></linearGradient></defs><rect x=".5" y=".5" width="31" height="31" rx="5" fill="url(#p)" stroke="#f0c0b0"/><path d="M11 10a9 9 0 1 0 10 0" fill="none" stroke="#fff" stroke-width="3"/><path d="M16 6v11" stroke="#fff" stroke-width="3"/></svg></button>
<div class="apps">
<button class="b multi" aria-label="Chrome"><svg width="30" height="30" viewBox="0 0 30 30"><circle cx="15" cy="15" r="14" fill="#ffd43b"/><path d="M15 15L3 8A14 14 0 0 1 27.500 9H15z" fill="#dd4535"/><path d="M15 15l-2 14A14 14 0 0 1 2.800 8L9 18z" fill="#3fae49"/><path d="M15 15l6 3-7 11-3-4z" fill="#ffd43b"/><circle cx="15" cy="15" r="7" fill="#fff"/><circle cx="15" cy="15" r="5.200" fill="#3f77c2"/></svg></button>
<button class="b" aria-label="Internet Explorer"><svg width="32" height="32" viewBox="0 0 32 32"><path d="M25.500 21.500a10 10 0 1 1 1.500-4.500H9" fill="none" stroke="#5cc3f0" stroke-width="5"/><path d="M4 28c-5-4 4-18 14-23 8-4 12-1 9 5" fill="none" stroke="#f2c132" stroke-width="2.600"/></svg></button>
<button class="b multi" aria-label="Explorer"><svg width="34" height="32" viewBox="0 0 34 32"><path d="M2 6l8-3 3 2h18v23H2z" fill="#e9cf78"/><path d="M5 3h6v5H5zM14 4h7v5h-7zM24 5h6v5h-6z" fill="#fff"/><path d="M8 3h3v2H8z" fill="#3a9d58"/><path d="M16 5h4v2h-4z" fill="#c8452f"/><path d="M26 6h3v2h-3z" fill="#3f77c2"/><path d="M1 9h31l-1 19H3z" fill="#f8e6a2"/><path d="M7 31V20q0-3 3-3h14q3 0 3 3v11h-4v-8H11v8z" fill="#8fcbea" stroke="#5ba4cf"/></svg></button>
<button class="b" aria-label="PhotoCap"><svg width="30" height="30" viewBox="0 0 30 30"><path d="M0 0h30v30H0z" fill="#4a4a4a"/><path d="M0 0h14L0 14z" fill="#8a8a8a"/><path d="M0 20h30v10H0z" fill="#333"/><path fill-rule="evenodd" d="M12 1h9q7 2 6 9-2 8-11 9l3 10h-6L0 17l6-1v-5zM14 7l-4 4 1 4 6-1 3-4-1-3z" fill="#f5cf4a"/></svg></button>
<button class="b" aria-label="Media Player" style="padding-right:4px"><svg width="28" height="28" viewBox="0 0 28 28"><path d="M8 2h18v22H8z" fill="#6fa5cf" stroke="#d4e6f4"/><path d="M5 4h17v22H5z" fill="#8dbde0"/><path d="M1 4h21v22H1z" fill="#a9cdea" stroke="#5e93bd"/><circle cx="11" cy="14" r="9" fill="#ee7f22" stroke="#fbe3c8"/><path d="M8 8.500l9 5.500-9 5.500z" fill="#fff"/></svg></button>
<button class="b multi" aria-label="Adobe Reader"><svg width="29" height="28" viewBox="0 0 29 28"><path d="M0 0h29v28H0z" fill="#b81414"/><path d="M0 0h29L0 20z" fill="#d32a24" opacity=".6"/><path d="M13 6c2-3 4 0 2 5-2 4-5 9-8 11-3 1-2-2 2-3 5-2 10-3 14-2 3 1 1 3-2 2-4-2-9-8-8-13z" fill="none" stroke="#fff" stroke-width="1.500"/></svg></button>
<button class="b multi on" aria-label="Excel">${officeIcon('#1e7145', '<path d="M18 8h9M18 12h9M18 16h9M18 20h9M23 5v20" stroke="#1e7145" stroke-width="1.500"/>', '<path d="M5 9.500l7.500 11M12.500 9.500l-7.500 11" stroke="#fff" stroke-width="2.500"/>')}</button>
<button class="b" aria-label="Notepad"><svg width="32" height="32" viewBox="0 0 32 32"><path d="M0 0h32v32H0z" fill="#cfdca6"/><path d="M4 7h18v20H4z" fill="#fff" stroke="#6f96cf"/><path d="M4 7h18v5H4z" fill="#5a8fdc"/><path d="M6 15h6v4H6zM6 21h6v4H6zM14 15h6M14 18h6M14 22h5" fill="#a9c8ee" stroke="#a9c8ee"/><path d="M25 5l4 4-11 13-5 2 1-5z" fill="#e8b64a" stroke="#8a6a2a"/><path d="M25 5l2-2 4 4-2 2z" fill="#b3524a"/></svg></button>
<button class="b multi" aria-label="Word">${officeIcon('#2a5699', '<path d="M18 8h9M18 11.500h9M18 15h9M18 18.500h9M18 22h9" stroke="#2a5699" stroke-width="1.300"/>', '<path d="M4 10l2.500 10L9 11.500 11.500 20 14 10" fill="none" stroke="#fff" stroke-width="2"/>')}</button>
</div>
<div class="tray">
<svg width="8" height="5" style="margin-right:3px"><path d="M0 5h8L4 0z" fill="#fff"/></svg>
<svg width="16" height="15" viewBox="0 0 16 15"><path d="M1 0v15M2 2c3-2 4 1 7 0v6c-3 1-4-1-7 0zM10 4c2 0 3 1 5 0-1 2 0 4-1 5-2 0-2-1-4-1z" fill="#fff" stroke="#fff"/></svg>
<svg width="15" height="15" viewBox="0 0 15 15" fill="none" stroke="#fff"><path d="M7.500 3.500h6v11h-6zM9 2h3" stroke-width="2"/><path d="M1 4h5M2.500 1v3M4.500 1v3M1.500 4v3h4V4M3.500 7v8" stroke-width="1.400"/></svg>
<svg width="16" height="14" viewBox="0 0 16 14" fill="none" stroke="#fff" stroke-width="1.500"><path d="M5 3h10v7H5M8 13h6M11 10v3M1 1h4v4H1zM3 5v8h2"/></svg>
<svg width="13" height="14" viewBox="0 0 13 14" style="margin-left:2px"><path d="M0 4h2l4-4v14l-4-4H0z" fill="#fff"/><path d="M8.500 4q2 3 0 6M10.500 2q3 5 0 10" fill="none" stroke="#ddd"/></svg>
<svg width="17" height="17" viewBox="0 0 17 17"><path d="M4 0l4 3-4 3-4-3zM12 0l4 3-4 3-4-3zM4 6l4 3-4 3-4-3zM12 6l4 3-4 3-4-3zM8 10l4 3-4 2-4-2z" fill="#8fd0f6"/><circle cx="12.500" cy="12.500" r="4" fill="#2f9e3f"/><path d="M10.500 12.500l1.500 2 3-4" fill="none" stroke="#fff"/></svg>
<svg width="16" height="16" viewBox="0 0 16 16" style="margin-left:2px"><circle cx="8" cy="8" r="7.500" fill="#a8a8a8" stroke="#c4c4c4"/><path d="M5 5l6 6M11 5l-6 6" stroke="#444" stroke-width="2.200"/></svg>
<div class="clock">上午 02:59<br>2013/6/20</div>
</div>`);

define('excel-app', `:host{display:flex;flex-direction:column;height:100vh}
app-header,ribbon-bar,formula-bar,sheet-tabs,status-bar,task-bar{flex:none}`,
`<app-header></app-header><ribbon-bar></ribbon-bar><formula-bar></formula-bar><sheet-grid></sheet-grid><sheet-tabs></sheet-tabs><status-bar></status-bar><task-bar></task-bar>`);
</script>
</body>
</html>
